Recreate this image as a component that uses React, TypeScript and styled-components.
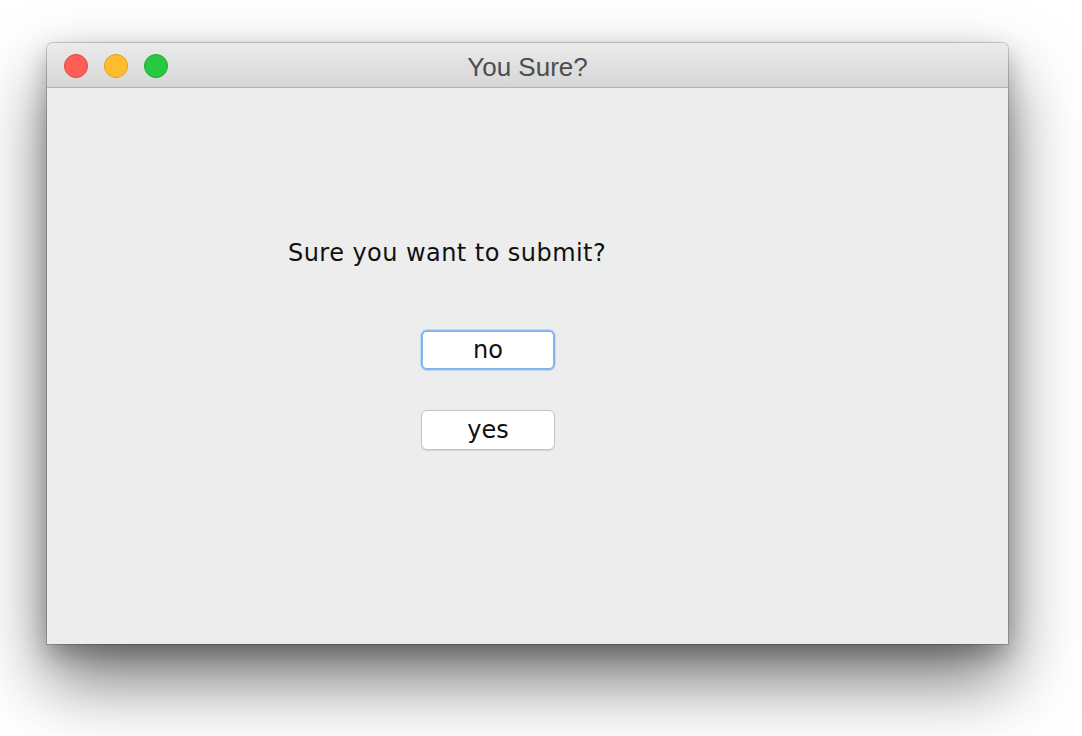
import React from "react";
import styled, { createGlobalStyle } from "styled-components";

const Global = createGlobalStyle`
  html, body { margin: 0; padding: 0; background: #ffffff; }
  body { width: 1082px; height: 736px; overflow: hidden; }
`;

const Stage = styled.div`
  width: 1082px;
  height: 736px;
  padding: 43px 0 0 47px;
  box-sizing: border-box;
  background: #ffffff;
`;

const Window = styled.div`
  width: 961px;
  height: 601px;
  display: flex;
  flex-direction: column;
  border-radius: 6px 6px 0 0;
  background: #ededed;
  box-shadow: 0 0 0 1px rgba(0, 0, 0, 0.18), 0 36px 70px rgba(0, 0, 0, 0.55),
    0 10px 24px rgba(0, 0, 0, 0.25);
  overflow: hidden;
`;

const TitleBar = styled.div`
  height: 45px;
  flex: none;
  position: relative;
  display: flex;
  align-items: center;
  justify-content: center;
  box-sizing: border-box;
  padding-top: 3px;
  background: linear-gradient(#ebebeb, #d6d6d6);
  border-bottom: 1px solid #b3b3b3;
`;

const Lights = styled.div`
  position: absolute;
  left: 17px;
  top: 11px;
  display: flex;
  gap: 16px;
`;

const Light = styled.span<{ $fill: string; $stroke: string }>`
  width: 24px;
  height: 24px;
  border-radius: 50%;
  box-sizing: border-box;
  background: ${(p) => p.$fill};
  border: 1px solid ${(p) => p.$stroke};
`;

const Title = styled.div`
  font-family: "Liberation Sans", Arial, sans-serif;
  font-size: 26px;
  line-height: 30px;
  color: #4d4d4d;
`;

const Content = styled.div`
  flex: 1;
  display: flex;
  flex-direction: column;
  align-items: flex-start;
  padding: 151px 0 0 241px;
`;

const Message = styled.div`
  font-family: "DejaVu Sans", sans-serif;
  font-size: 24px;
  line-height: 28px;
  color: #111;
  letter-spacing: 0.45px;
`;

const Buttons = styled.div`
  display: flex;
  flex-direction: column;
  gap: 40px;
  margin: 63px 0 0 133px;
`;

const Button = styled.button<{ $focused?: boolean }>`
  width: 134px;
  height: 40px;
  box-sizing: border-box;
  border-radius: 6px;
  background: #ffffff;
  font-family: "DejaVu Sans", sans-serif;
  font-size: 24px;
  color: #111;
  padding: 0;
  border: ${(p) => (p.$focused ? "2px solid #82b4f0" : "1px solid #c4c4c4")};
  box-shadow: ${(p) =>
    p.$focused ? "0 0 0 1px rgba(130,180,240,0.35)" : "0 1px 1px rgba(0,0,0,0.12)"};
`;

export default function App() {
  return (
    <>
      <Global />
      <Stage>
        <Window>
          <TitleBar>
            <Lights>
              <Light $fill="#fe5f57" $stroke="#e2463f" />
              <Light $fill="#febc2e" $stroke="#e1a116" />
              <Light $fill="#28c840" $stroke="#1aab29" />
            </Lights>
            <Title>You Sure?</Title>
          </TitleBar>
          <Content>
            <Message>Sure you want to submit?</Message>
            <Buttons>
              <Button $focused>no</Button>
              <Button>yes</Button>
            </Buttons>
          </Content>
        </Window>
      </Stage>
    </>
  );
}
